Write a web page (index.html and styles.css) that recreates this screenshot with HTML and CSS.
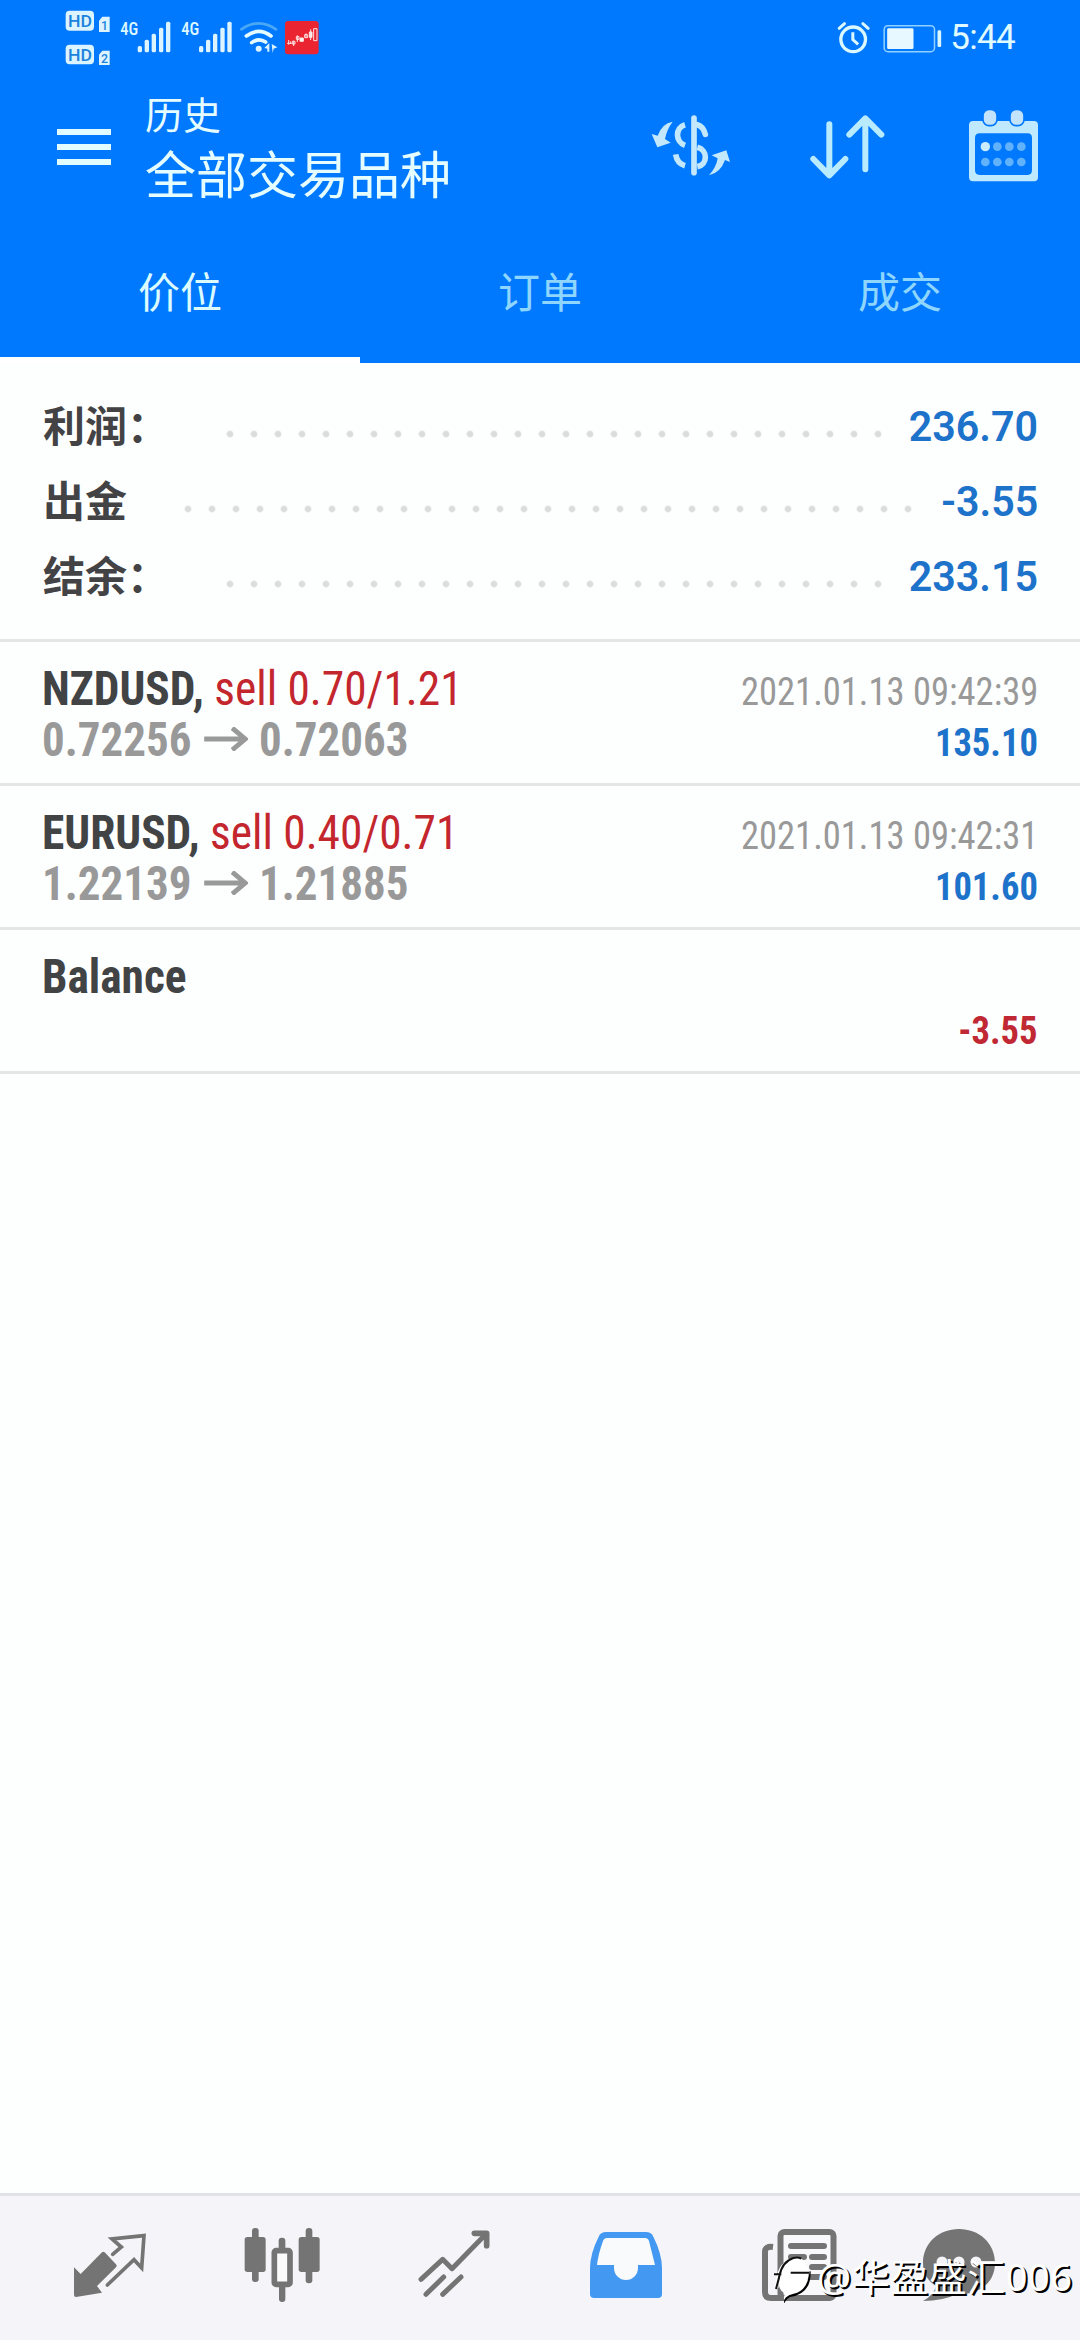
FILE: index.html
```html
<!DOCTYPE html>
<html lang="zh-CN">
<head>
<meta charset="utf-8">
<title>历史</title>
<link rel="stylesheet" href="styles.css">
</head>
<body>
<div class="app">
  <div class="status">
    <svg class="status-left" viewBox="0 0 900 225" width="300" height="75">
      <g fill="#dcf4ff">
        <rect x="77" y="32" width="85" height="60" rx="12"/>
        <rect x="77" y="134" width="85" height="59" rx="12"/>
        <path d="M187 50h22v46h-32V62z"/>
        <path d="M187 152h22v43h-32v-31z"/>
        <g class="bars">
          <rect x="293" y="138" width="13" height="19" rx="5"/><rect x="314" y="119" width="13" height="38" rx="5"/><rect x="335" y="101" width="13" height="56" rx="5"/><rect x="357" y="83" width="13" height="74" rx="5"/><rect x="378" y="65" width="13" height="92" rx="5"/>
          <rect x="477" y="138" width="13" height="19" rx="5"/><rect x="498" y="119" width="13" height="38" rx="5"/><rect x="519" y="101" width="13" height="56" rx="5"/><rect x="541" y="83" width="13" height="74" rx="5"/><rect x="562" y="65" width="13" height="92" rx="5"/>
        </g>
        <circle cx="656" cy="146" r="9"/>
        <path d="M673 144l15-15v26h-6v-9zM695 132l17 10-11 4-3 13z"/>
      </g>
      <g class="badge-text">
        <text x="84" y="80" textLength="72" lengthAdjust="spacingAndGlyphs" font-size="50">HD</text>
        <text x="84" y="182" textLength="72" lengthAdjust="spacingAndGlyphs" font-size="50">HD</text>
        <text x="183" y="89" font-size="37">1</text>
        <text x="183" y="190" font-size="37">2</text>
      </g>
      <g class="net-text">
        <text x="241" y="106" textLength="54" lengthAdjust="spacingAndGlyphs">4G</text>
        <text x="424" y="106" textLength="54" lengthAdjust="spacingAndGlyphs">4G</text>
      </g>
      <g fill="none" stroke="#e6fbff" stroke-width="11" stroke-linecap="round">
        <path d="M604 88Q656 52 708 88" stroke="#4aa8f5" stroke-width="8"/>
        <path d="M619 108Q656 80 693 108"/>
        <path d="M635 128Q656 112 677 126"/>
      </g>
      <rect x="735" y="63" width="101" height="100" rx="10" fill="#ea2430"/>
      <g fill="none" stroke="#ffe3e3" stroke-width="3">
        <path d="M746 120v14M741 130h14M752 124v8M761 122v16M757 124h8v8h-8zM772 106v20M769 110h8v8h-8zM798 100v14M794 104h9v9h-9zM821 86h10v36h-10z"/>
        <path d="M780 114h10v10h-10zM808 96h8v16h-8zM812 88v32" fill="#fff"/>
      </g>
    </svg>
    <div class="status-right">
      <svg viewBox="110 60 320 105" width="107" height="35">
        <g fill="none" stroke="#dcf8ff">
          <circle cx="158" cy="115" r="37" stroke-width="10"/>
          <path d="M157 94v22l16 14" stroke-width="9"/>
          <path d="M116 82l16-14M203 82l-16-14" stroke-width="9" stroke-linecap="round"/>
          <rect x="251" y="74" width="151" height="78" rx="11" stroke-width="4.500" stroke="#8fd2ff"/>
        </g>
        <rect x="260" y="82" width="79" height="62" rx="4" fill="#e8f8ff"/>
        <rect x="411" y="88" width="11" height="50" rx="4" fill="#dcf8ff"/>
      </svg>
      <span class="clock">5:44</span>
    </div>
  </div>

  <div class="toolbar">
    <div class="menu"><i></i><i></i><i></i></div>
    <div class="titles"><div class="title">历史</div><div class="subtitle">全部交易品种</div></div>
    <div class="actions">
      <svg viewBox="90 50 240 230" width="80" height="76.667">
        <g fill="none" stroke="#c3e8fb" stroke-width="17">
          <path d="M219 83v164" stroke-linecap="round"/>
          <path d="M192 103c-30 9-30 51 0 62"/>
          <path d="M229 103q18 5 24 29" stroke-linecap="round"/>
          <path d="M229 171c32 8 32 52 0 58"/>
          <path d="M164 192q4 27 28 34"/>
        </g>
        <g fill="#c3e8fb">
          <path d="M155 94q-33 6-45 42l-18-5 17 40 40-14-17-11q5-28 23-52z"/>
          <path d="M264 255q34-7 48-46l15 6-11-35-44 15 18 9q-4 27-26 51z"/>
        </g>
      </svg>
      <svg viewBox="560 50 235 230" width="78.333" height="76.667">
        <g fill="none" stroke="#b9ebff" stroke-width="18" stroke-linecap="round" stroke-linejoin="round">
          <path d="M624 102v150M576 206l48 49 48-49"/>
          <path d="M732 237V90M684 133l48-49 48 49"/>
        </g>
      </svg>
      <svg viewBox="1035 50 225 230" width="75" height="76.667">
        <path fill="#bfe9ff" fill-rule="evenodd" d="M1056 92h183q12 0 12 12v157q0 12-12 12h-183q-12 0-12-12V104q0-12 12-12zM1076 129q-14 0-14 14v97q0 14 14 14h144q13 0 13-14v-97q0-14-13-14z"/>
        <rect x="1086" y="57" width="42" height="49" rx="18" fill="#c3e2fb" stroke="#0079ff" stroke-width="5"/>
        <rect x="1167" y="57" width="42" height="49" rx="18" fill="#c3e2fb" stroke="#0079ff" stroke-width="5"/>
        <circle cx="1093" cy="169" r="14" fill="#c9edff"/>
        <g fill="#62b2fb"><circle cx="1129" cy="169" r="13"/><circle cx="1165" cy="169" r="13"/><circle cx="1201" cy="169" r="13"/><circle cx="1093" cy="215" r="13"/><circle cx="1129" cy="215" r="13"/><circle cx="1165" cy="215" r="13"/><circle cx="1201" cy="215" r="13"/></g>
      </svg>
    </div>
  </div>

  <div class="tabs"><div class="tab active">价位</div><div class="tab">订单</div><div class="tab">成交</div></div>

  <div class="summary">
    <div class="sum-row"><span>利润：</span><i class="dots"></i><b>236.70</b></div>
    <div class="sum-row"><span>出金</span><i class="dots"></i><b>-3.55</b></div>
    <div class="sum-row"><span>结余：</span><i class="dots"></i><b>233.15</b></div>
  </div>

  <div class="deals">
    <div class="deal">
      <div class="line"><div class="name"><b>NZDUSD,</b> <span class="sell">sell 0.70/1.21</span></div><div class="date">2021.01.13 09:42:39</div></div>
      <div class="line"><div class="price">0.72256<svg class="arrow" viewBox="0 0 47 24" width="47" height="24"><path d="M0 12h43M30 1l14 11-14 11" fill="none" stroke="#999" stroke-width="5"/></svg>0.72063</div><div class="value">135.10</div></div>
    </div>
    <div class="deal">
      <div class="line"><div class="name"><b>EURUSD,</b> <span class="sell">sell 0.40/0.71</span></div><div class="date">2021.01.13 09:42:31</div></div>
      <div class="line"><div class="price">1.22139<svg class="arrow" viewBox="0 0 47 24" width="47" height="24"><path d="M0 12h43M30 1l14 11-14 11" fill="none" stroke="#999" stroke-width="5"/></svg>1.21885</div><div class="value">101.60</div></div>
    </div>
    <div class="deal">
      <div class="line"><div class="name"><b>Balance</b></div></div>
      <div class="line"><div class="price">&nbsp;</div><div class="value loss">-3.55</div></div>
    </div>
  </div>

  <div class="nav">
    <svg viewBox="90 138 240 240" width="80" height="80">
      <path fill="#747474" d="M102 265l20 20 64-65q4-3 8 0l34 36q4 4 0 9l-57 56 15 20-78 13q-6 0-6-6z"/>
      <path fill="none" stroke="#747474" stroke-width="11" stroke-linejoin="miter" stroke-linecap="round" d="M218 226l26-22-28-24 96-10-7 97-23-25-80 76"/>
    </svg>
    <svg viewBox="604 138 240 240" width="80" height="80">
      <g fill="#747474"><rect x="612" y="174" width="63" height="105" rx="8"/><rect x="634" y="147" width="20" height="162" rx="9"/><rect x="774" y="174" width="63" height="105" rx="8"/><rect x="795" y="147" width="20" height="166" rx="9"/><rect x="714" y="176" width="20" height="40" rx="9"/><rect x="715" y="310" width="19" height="59" rx="9"/></g>
      <rect x="701" y="215" width="47" height="101" rx="5" fill="#fafafb" stroke="#747474" stroke-width="17"/>
    </svg>
    <svg viewBox="1121 138 240 240" width="80" height="80">
      <g fill="none" stroke="#747474" stroke-width="15" stroke-linecap="round" stroke-linejoin="round"><path d="M1142 301l65-60 28 28 102-104M1157 346l53-52M1207 346l55-52"/><path d="M1302 163h37v37" stroke-width="17"/></g>
    </svg>
    <svg viewBox="-4 -7 80 80" width="80" height="80">
      <path fill="#4398f1" d="M16 0h40q5 0 7 4 9 18 9 32v26q0 4-4 4H4q-4 0-4-4V36Q0 22 9 4q2-4 7-4z"/>
      <path fill="#f9fafc" d="M17 6h38q3 0 4 3l6 24H48v3a12 12 0 0 1-24 0v-3H7q1-10 6-24 1-3 4-3z"/>
    </svg>
    <svg viewBox="-4 -4 80 80" width="80" height="80">
      <g fill="none" stroke="#747474" stroke-width="6"><rect x="18.500" y="3" width="53" height="66" rx="4" fill="#f9f9fc"/><path d="M11 18q-8-1-8 5v40q0 6 6 6h14"/><path d="M29 17h33M29 28h13M50 28h12M29 38h13M50 38h12M29 48h33" stroke-linecap="round"/></g>
    </svg>
    <svg viewBox="-4 -4 80 80" width="80" height="80">
      <path fill="#747474" d="M36 0C56 0 72 14 72 34S56 66 34 65Q20 72 0 72 11 66 13 57 0 49 0 34C0 14 16 0 36 0z"/>
      <g fill="#f5f5f9"><circle cx="19" cy="33" r="5.500"/><circle cx="36" cy="33" r="5.500"/><circle cx="53" cy="33" r="5.500"/></g>
    </svg>
    <div class="watermark">
      <svg viewBox="55 105 120 150" width="40" height="50">
        <path fill="#fff" d="M60 206l8-40q10-46 62-52 24 8 32 40 2 62-56 74-14 6-17 15-4-10 4-19-22-9-20-34l4-28q-6 14-5 44z"/>
        <path fill="#000" d="M168 157q2 68-62 77-14 8-16 19-5-6 3-17 12-10 24-12 42-8 48-67z"/>
        <path d="M64 210l10-38q8-44 42-55 14-4 24 2M58 166h22M108 161h56" fill="none" stroke="#111" stroke-width="6"/>
      </svg>
      <span>@华盈盛汇006</span>
    </div>
  </div>
</div>
</body>
</html>
```
FILE: styles.css
```css
* { box-sizing: border-box; }
body { margin: 0; background: #fdfefe; font-family: Roboto, "Noto Sans CJK SC", sans-serif; }
svg { display: block; flex: none; }
.app { width: 1080px; height: 2340px; display: flex; flex-direction: column; overflow: hidden; }

.status { height: 76px; background: #0079ff; display: flex; justify-content: space-between; padding: 0 65px 0 40px; }
.badge-text { fill: #1d83dd; font-weight: 500; }
.net-text { fill: #dcf8ff; font-size: 54px; font-weight: 500; font-family: "Roboto Condensed", Roboto, sans-serif; }
.status-right { display: flex; align-items: center; gap: 6px; }
.clock { color: #e0fbff; font-size: 35px; line-height: 76px; letter-spacing: -.7px; }

.toolbar { height: 149px; background: #0079ff; display: flex; padding: 0 41px 0 57px; }
.menu { width: 54px; display: flex; flex-direction: column; gap: 9px; padding-top: 53px; }
.menu i { height: 6px; background: #e2fdff; }
.titles { color: #e6fdff; margin-left: 34px; padding-top: 18px; }
.title { font-size: 38px; line-height: 44px; }
.subtitle { font-size: 51px; line-height: 78px; }
.actions { display: flex; margin-left: auto; padding-top: 31px; }
.actions svg + svg { margin-left: 77px; }
.actions svg:last-child { margin-left: 80px; margin-right: -2px; }

.tabs { height: 138px; background: #0079ff; display: grid; grid-template-columns: repeat(3, 1fr); text-align: center; }
.tab { font-size: 42px; line-height: 138px; color: #8fd6ff; }
.active { color: #dcfbff; box-shadow: inset 0 -6px #fff; }

.summary { height: 279px; padding: 27px 42px 0 43px; border-bottom: 3px solid #e4e5e5; }
.sum-row { height: 75px; display: flex; font-size: 42px; line-height: 75px; font-weight: 700; color: #434345; }
.sum-row b { color: #1d72ca; font-weight: 650; line-height: 74px; transform: scaleX(.98); transform-origin: right; }
.dots { flex: 1; height: 8px; margin: 40px 12px 0 49px; background: radial-gradient(circle, #dcdcdc 2.5px, transparent 4px) 0 0 / 24px 8px repeat-x; }

.deal { height: 144px; padding: 21px 42px 0; border-bottom: 3px solid #e4e5e5; font-family: "Roboto Condensed", Roboto, sans-serif; }
.line { height: 51px; line-height: 51px; display: flex; justify-content: space-between; align-items: baseline; white-space: nowrap; }
.line > div { transform: scaleX(.937); transform-origin: left; }
.line > div + div { transform-origin: right; }
.line > .name { transform: scaleX(.945); }
.name { font-size: 48px; color: #414345; }
.name b { font-weight: 680; }
.sell { color: #c4262e; }
.price { font-size: 48px; font-weight: 700; color: #999; }
.arrow { display: inline-block; vertical-align: 5px; margin: 0 12px 0 13px; }
.date { font-size: 39px; color: #999; }
.value { font-size: 39px; font-weight: 700; color: #1d72ca; }
.value.loss { color: #c02834; }

.nav { position: relative; height: 147px; margin-top: auto; border-top: 3px solid #e1e1e8; background: #f5f5f9; display: grid; grid-template-columns: repeat(5, 172px) 1fr; justify-items: center; padding: 29px 46px 0 24px; }
.watermark { position: absolute; left: 773px; top: 58px; display: flex; align-items: center; color: #fff; font: 400 38px/50px "Noto Sans", "Noto Sans CJK SC", sans-serif; text-shadow: 2px 2px 0 #000; white-space: nowrap; }
.watermark span { margin: -6px 0 0 4px; letter-spacing: .5px; }
```
